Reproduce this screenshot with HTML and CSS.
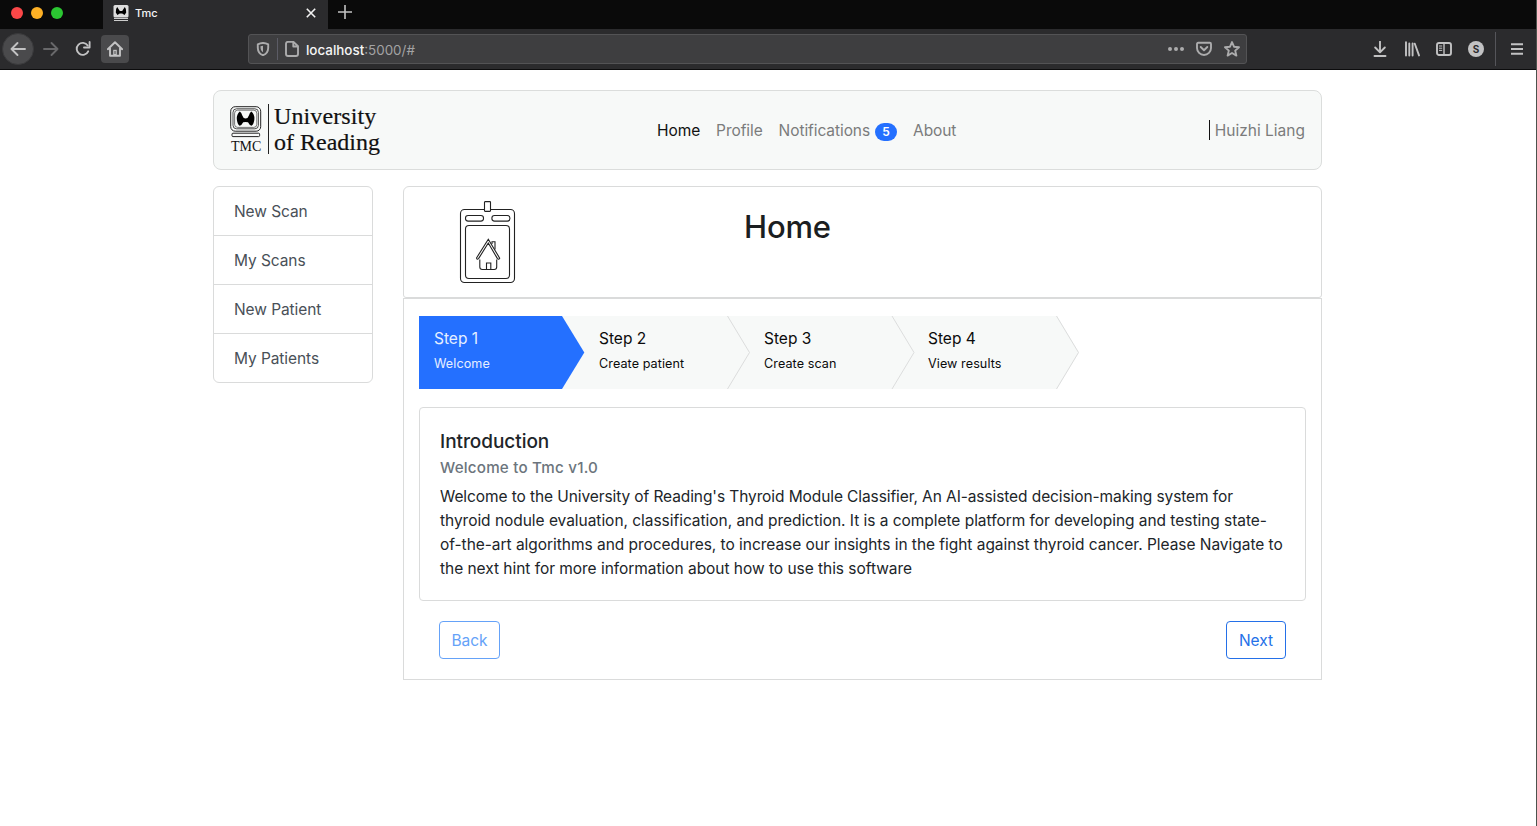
FILE: index.html
```html
<!DOCTYPE html>
<html lang="en">
<head>
<meta charset="utf-8">
<title>Tmc</title>
<link rel="stylesheet" href="styles.css">
</head>
<body>
<div class="window">
  <div class="tabbar">
    <div class="lights"><i class="light red"></i><i class="light amber"></i><i class="light green"></i></div>
    <div class="tab">
      <svg class="favicon" width="16" height="16" viewBox="0 0 16 16"><rect x=".5" y="0" width="15" height="12.5" rx="1.5" fill="#ddd"/><path d="M4.2 2 6.8 6H9.2L11.8 2Q13.6 4 13.2 7.5L11.6 10 9.2 8.6H6.8L4.4 10 2.8 7.5Q2.4 4 4.2 2Z" fill="#000"/><path d="M1 13.5H15M1 15.5H15" stroke="#ccc"/></svg>
      <span class="tab-title">Tmc</span>
      <svg class="tab-close" width="10" height="10" viewBox="0 0 10 10"><path d="M.8.8 9.2 9.2M9.2.8.8 9.2" stroke="#f2f2f2" stroke-width="1.6"/></svg>
    </div>
    <svg class="newtab" width="14" height="14" viewBox="0 0 14 14"><path d="M7 0V14M0 7H14" stroke="#c2c2c2" stroke-width="1.6"/></svg>
  </div>
  <div class="toolbar">
    <div class="navbtns">
      <span class="back"><svg width="16" height="16" viewBox="0 0 16 16"><path d="M15 8H1.5M7.5 2 1.5 8 7.5 14" class="ln"/></svg></span>
      <span class="tool"><svg width="16" height="16" viewBox="0 0 16 16"><path d="M1 8H14.5M8.5 2 14.5 8 8.5 14" class="ln dim"/></svg></span>
      <span class="tool"><svg width="16" height="16" viewBox="0 0 16 16"><path d="M13.2 10.3A6 6 0 1 1 12.7 4.5" class="ln"/><path d="M14.6 1V6.5H9" class="ln" stroke-linecap="butt"/></svg></span>
      <span class="tool home"><svg width="16" height="16" viewBox="0 0 16 16"><path d="M.8 8.2 8 1.2 15.2 8.2M3 7V14.8H13V7" class="ln"/><path d="M6.2 14V8.8H9.8V14Z" fill="#c2c2c3"/><path d="M8 10V13" stroke="#4a4a4c"/></svg></span>
    </div>
    <div class="urlbar">
      <svg class="shield" width="14" height="14" viewBox="0 0 14 14"><path d="M1.8 2.3Q7-.4 12.2 2.3V6Q12 11.5 7 13.2Q2 11.5 1.8 6Z" class="ln gray"/><path d="M7 3.8Q5 3.8 4.5 4.2Q4.3 8.5 7 10.3Z" fill="#acacad"/></svg>
      <i class="url-sep"></i>
      <svg class="page-icon" width="14" height="16" viewBox="0 0 14 16"><path d="M3 .9H8.5L13 5.3V13Q13 15 11 15H3Q1 15 1 13V3Q1 .9 3 .9ZM8.3 1V5.5H13" class="ln gray"/></svg>
      <span class="url"><b>localhost</b>:5000/#</span>
      <svg width="16" height="16" viewBox="0 0 16 16"><path d="M2 8h.01M8 8h.01M14 8h.01" stroke="#acacad" stroke-width="4" stroke-linecap="round"/></svg>
      <svg width="16" height="16" viewBox="0 0 16 16"><path d="M2.2 1.8H13.8Q15 1.8 15 3V7A7 7 0 0 1 1 7V3Q1 1.8 2.2 1.8Z" class="ln gray"/><path d="M4.7 6 8 9.2 11.3 6" class="ln gray"/></svg>
      <svg width="16" height="16" viewBox="0 0 16 16"><path d="M8 1.1 10 5.7 15 6.2 11.2 9.6 12.4 14.6 8 12 3.6 14.6 4.8 9.6 1 6.2 6 5.7Z" class="ln gray"/></svg>
    </div>
    <div class="actions">
      <svg width="16" height="16" viewBox="0 0 16 16"><path d="M8 .5V11M3.2 6.5 8 11.3 12.8 6.5M2.5 15H13.5" class="ln"/></svg>
      <svg width="16" height="16" viewBox="0 0 16 16"><path d="M2 1.2V14.6M5.3 2.5V14.6M8.6 2.5V14.6M10.8 2.7 15 14.4" class="ln" stroke-linecap="butt"/></svg>
      <svg width="16" height="16" viewBox="0 0 16 16"><rect x="1" y="2" width="14" height="12" rx="2" class="ln"/><path d="M8 2V14" stroke="#c2c2c3" stroke-width="1.4"/><path d="M3 5H6.2M3 7.2H6.2M3 9.4H6.2" stroke="#c2c2c3"/></svg>
      <span class="avatar">S</span>
    </div>
    <i class="menu-sep"></i>
    <svg class="burger" width="12" height="12" viewBox="0 0 12 12"><path d="M0 1.2H12M0 6H12M0 10.8H12" stroke="#c2c2c3" stroke-width="1.9"/></svg>
  </div>
  <div class="page">
    <header class="site-head">
      <div class="brand">
        <svg class="mark" width="32" height="32" viewBox="0 0 32 32"><g fill="none" stroke="#222"><rect x=".7" y=".7" width="30" height="24.5" rx="4.5"/><rect x="3" y="2.8" width="25.4" height="20" rx="3.5" stroke-width=".8"/><rect x="4.6" y="4.2" width="22.2" height="17.2" rx="3" stroke-width=".6"/><rect x="2" y="27.2" width="27.6" height="3.4" rx="1"/></g><path d="M9.8 5.5Q11.5 6.5 12.3 9.5Q13 12.2 15.6 12.5Q18.2 12.2 18.9 9.5Q19.7 6.5 21.4 5.5Q24.6 8 24.4 13Q24 18 21.6 19.8Q19.6 19.4 18 16.2Q15.6 15.6 13.2 16.2Q11.6 19.4 9.6 19.8Q7.2 18 6.8 13Q6.6 8 9.8 5.5Z" fill="#000"/></svg>
        <span class="tmc">TMC</span>
      </div>
      <div class="uni"><span class="uni-a">University</span><span class="uni-b">of Reading</span></div>
      <nav class="nav"><a class="on">Home</a><a>Profile</a><a class="notif">Notifications<span class="badge">5</span></a><a>About</a></nav>
      <div class="user">Huizhi Liang</div>
    </header>
    <div class="cols">
      <aside class="side"><a>New Scan</a><a>My Scans</a><a>New Patient</a><a>My Patients</a></aside>
      <main class="main">
        <section class="title-card">
          <svg class="badge-icon" width="57" height="84" viewBox="0 0 57 84" fill="none" stroke="#222" stroke-width="1.1"><rect x="1.5" y="8.5" width="54" height="73" rx="4"/><rect x="6.5" y="24.5" width="44" height="53" rx="3.5"/><rect x="6.5" y="14.5" width="18" height="5.6" rx="2.6"/><rect x="32.9" y="14.5" width="18" height="5.6" rx="2.6"/><rect x="25.5" y=".6" width="6" height="9.8" rx=".6" fill="#fff"/><path d="M20.8 58.5V66Q20.8 68.5 23.3 68.5H35.2Q37.7 68.5 37.7 66V58.5M27.5 68.5V62H31.8V68.5M33 43V40.8H36V48.5"/><path d="M29.3 38.2 40.7 57.2Q39.5 59.2 38.3 57.4L29.3 42 19.7 57.4Q18 59.2 17.5 57Z"/></svg>
          <h1>Home</h1>
        </section>
        <section class="wizard">
          <div class="steps">
            <svg class="arrows" width="661" height="73" viewBox="0 0 661 73"><path d="M143 0H638L660 36.5 638 73H143Z" fill="#f7f9f8"/><path d="M0 0H143L165.3 36.5 143 73H0Z" fill="#2470ff"/><path d="M308.5 0 330.5 36.5 308.5 73M473 0 495 36.5 473 73M637.5 0 659.5 36.5 637.5 73" fill="none" stroke="#dcdddd"/></svg>
            <div class="step now"><span>Step 1</span><small>Welcome</small></div>
            <div class="step"><span>Step 2</span><small>Create patient</small></div>
            <div class="step"><span>Step 3</span><small>Create scan</small></div>
            <div class="step"><span>Step 4</span><small>View results</small></div>
          </div>
          <article class="intro">
            <h2>Introduction</h2>
            <h3>Welcome to Tmc v1.0</h3>
            <p><span class="lead">Welcome to the University of Reading's Thyroid Module Classifier, An AI-assisted decision-making system for</span><br>thyroid nodule evaluation, classification, and prediction. It is a complete platform for developing and testing state-<br>of-the-art algorithms and procedures, to increase our insights in the fight against thyroid cancer. Please Navigate to<br>the next hint for more information about how to use this software</p>
          </article>
          <div class="buttons"><button class="btn off">Back</button><button class="btn">Next</button></div>
        </section>
      </main>
    </div>
  </div>
</div>
</body>
</html>
```
FILE: styles.css
```css
* { box-sizing: border-box; }
body { margin: 0; background: #fff; font-family: Inter, "Liberation Sans", sans-serif; }
svg { display: block; flex: none; }
.window { height: 826px; border-right: 1px solid #4c534d; overflow: hidden; }
.tabbar { display: flex; height: 29px; background: #0a0a0a; }
.lights { display: flex; gap: 8px; width: 103px; padding: 7px 0 0 11px; }
.light { width: 12px; height: 12px; border-radius: 50%; }
.red { background: #fa4748; }
.amber { background: #fdb025; }
.green { background: #2bc732; }
.tab { display: flex; align-items: center; width: 225px; height: 29px; padding: 0 12px 3px 10px; background: #2b2b2d; }
.tab-title { margin-left: 6px; font-size: 11px; font-weight: 500; color: #f5f5f5; }
.tab-close { margin-left: auto; }
.newtab { margin: 5px 0 0 10px; }
.toolbar { display: flex; align-items: center; height: 41px; background: #2b2b2d; border-bottom: 1px solid #0c0c0d; }
.ln { fill: none; stroke: #c2c2c3; stroke-width: 1.9; stroke-linecap: round; stroke-linejoin: round; }
.dim { stroke: #68686a; }
.gray { stroke: #acacad; }
.navbtns { display: flex; align-items: center; gap: 4px; width: 248px; padding-left: 2px; }
.back { display: grid; place-items: center; width: 32px; height: 32px; border-radius: 50%; background: #4a4a4c; border: 1px solid #3a3a3c; margin-right: -1px; }
.tool { display: grid; place-items: center; width: 28px; height: 28px; border-radius: 4px; }
.home { background: #4a4a4c; }
.urlbar { display: flex; align-items: center; gap: 12px; width: 999px; height: 30px; padding: 0 6px 0 7px; background: #3e3e40; border: 1px solid #535355; border-radius: 3px; }
.url-sep { width: 1px; height: 22px; background: #5c5c66; margin: 0 -5px 0 -5px; }
.page-icon { margin-right: -5px; }
.url { margin-right: auto; padding-top: 1px; font-size: 13.4px; color: #a3a3a4; }
.url b { font-weight: 500; color: #f5f5f5; }
.actions { display: flex; align-items: center; gap: 16px; margin-left: 125px; }
.avatar { display: grid; place-items: center; width: 16px; height: 16px; border-radius: 50%; background: #c2c2c3; color: #2b2b2d; font-size: 10px; font-weight: 700; }
.menu-sep { width: 1px; height: 34px; margin: 0 15px 0 11px; background: #55555a; }
.page { width: 1109px; margin: 20px 0 0 213px; font-size: 15.5px; }
.site-head { display: flex; height: 80px; padding: 0 16px; border: 1px solid #dbdddc; border-radius: 8px; background: #f7f9f8; }
.brand { display: flex; flex-direction: column; width: 38px; padding-top: 15px; }
.tmc { font: 14px/16px "Liberation Serif", serif; color: #111; margin: 1px 0 0 1px; }
.uni { display: flex; flex-direction: column; width: 116px; height: 50px; margin-top: 13px; padding-left: 5px; border-left: 1px solid #222; font: 24px/26px "Liberation Serif", serif; color: #111; white-space: nowrap; }
.uni-a { margin-top: -1px; letter-spacing: .1px; -webkit-text-stroke: .2px #111; }
.uni-b { -webkit-text-stroke: .2px #111; }
.nav { display: flex; gap: 16px; margin-left: 273px; line-height: 24px; padding-top: 28px; color: #7b7c7c; letter-spacing: -.08px; }
.on { color: #111; }
.notif { display: flex; }
.badge { display: grid; place-items: center; width: 22px; height: 18px; margin: 4px 0 0 5px; border-radius: 9px; background: #2470ff; color: #fff; font-size: 12px; font-weight: 600; line-height: 18px; }
.user { height: 20px; margin: 29px 0 0 auto; padding-left: 5px; border-left: 1px solid #111; line-height: 22px; color: #7b7c7c; white-space: nowrap; }
.cols { display: flex; gap: 30px; align-items: flex-start; margin-top: 16px; }
.side { display: flex; flex-direction: column; width: 160px; border: 1px solid #dadbdb; border-radius: 6px; color: #495057; letter-spacing: -.08px; }
.side a { height: 49px; padding-left: 20px; line-height: 50px; border-bottom: 1px solid #dadbdb; }
.side a:last-child { border-bottom: 0; height: 48px; }
.main { width: 919px; }
.title-card { display: flex; height: 112px; border: 1px solid #dadbdb; border-radius: 6px 6px 3px 3px; }
.badge-icon { margin: 14px 0 0 55px; }
h1 { margin: 21px 0 0 228px; font-size: 31px; line-height: 38px; font-weight: 500; color: #1b1e21; letter-spacing: -.2px; }
.wizard { height: 382px; padding: 17px 15px 0; border: 1px solid #dadbdb; }
.steps { display: grid; grid-template-columns: 165px 165px 164px 165px; height: 73px; }
.arrows { grid-area: 1 / 1 / 2 / 5; }
.step { grid-row: 1; display: flex; flex-direction: column; padding: 11px 0 0 15px; color: #0b0b0b; z-index: 1; line-height: 24px; }
.step:nth-child(2) { grid-column: 1; }
.step:nth-child(3) { grid-column: 2; }
.step:nth-child(4) { grid-column: 3; }
.step:nth-child(5) { grid-column: 4; }
.step small { font-size: 12.6px; line-height: 19px; margin-top: 3px; letter-spacing: .08px; }
.now { color: #e6efff; }
.intro { height: 194px; margin-top: 18px; padding: 22px 20px; border: 1px solid #dadbdb; border-radius: 4px; color: #212529; }
h2 { margin: 0; font-size: 19px; line-height: 24px; font-weight: 500; letter-spacing: -.05px; }
h3 { margin: 4px 0 8px; font-size: 15.2px; line-height: 19px; font-weight: 500; color: #6c757d; letter-spacing: .2px; }
p { margin: 0; line-height: 24px; white-space: nowrap; letter-spacing: -.037px; }
.lead { letter-spacing: -.092px; }
.buttons { display: flex; justify-content: space-between; padding: 20px 20px 0; }
.btn { width: 61px; height: 38px; padding: 2px 0 0; border: 1px solid #2470e8; border-radius: 4px; background: #fff; color: #2470e8; font: 15.5px/24px Inter, sans-serif; }
.btn + .btn { width: 60px; }
.off { color: #65a2f8; border-color: #65a2f8; }
```
